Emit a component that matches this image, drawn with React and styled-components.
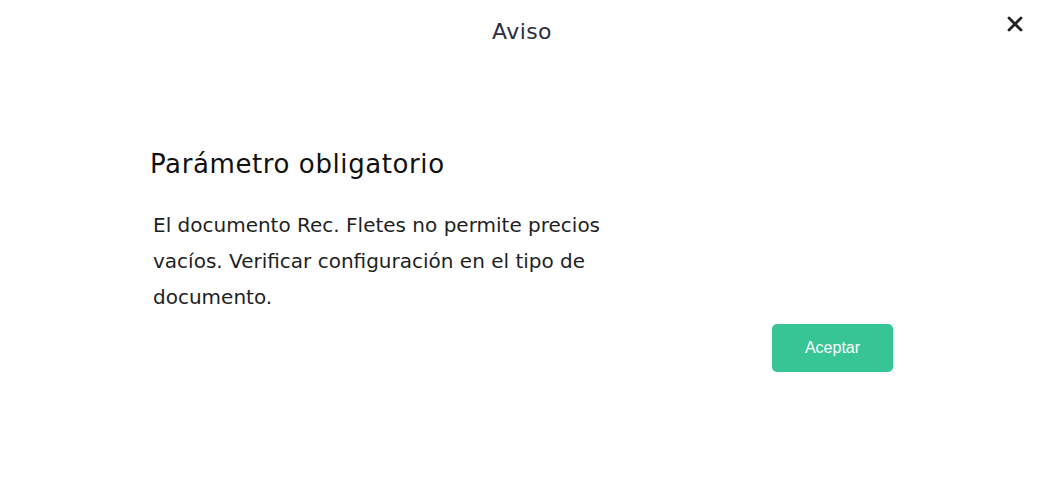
import React from 'react';
import styled, { createGlobalStyle } from 'styled-components';

const GlobalStyle = createGlobalStyle`
  html, body {
    margin: 0;
    padding: 0;
    background: #fff;
  }
  body {
    font-family: "DejaVu Sans", "Open Sans", sans-serif;
  }
`;

const Modal = styled.div`
  width: 1037px;
  height: 483px;
  display: flex;
  flex-direction: column;
  box-sizing: border-box;
`;

const Header = styled.header`
  position: relative;
  height: 63px;
  display: flex;
  align-items: center;
  justify-content: center;
  padding-left: 7px;
`;

const HeaderTitle = styled.h2`
  margin: 0;
  font-size: 22px;
  font-weight: 400;
  color: #2b2f3c;
  letter-spacing: 0.4px;
`;

const CloseButton = styled.button`
  position: absolute;
  top: 13px;
  right: 11px;
  width: 22px;
  height: 22px;
  padding: 0;
  border: none;
  background: transparent;
  cursor: pointer;
  display: flex;
  align-items: center;
  justify-content: center;
  svg {
    display: block;
  }
`;

const Body = styled.div`
  padding: 83px 144px 0 150px;
  display: flex;
  flex-direction: column;
`;

const Title = styled.h1`
  margin: 0 0 25px;
  font-size: 26px;
  font-weight: 400;
  color: #111;
  line-height: 36px;
  letter-spacing: 0.6px;
`;

const Message = styled.p`
  margin: 0 0 0 3px;
  max-width: 480px;
  font-size: 20px;
  line-height: 36px;
  color: #1f1f1f;
`;

const Actions = styled.div`
  display: flex;
  justify-content: flex-end;
  margin-top: 9px;
`;

const AcceptButton = styled.button`
  width: 121px;
  height: 48px;
  border: none;
  border-radius: 5px;
  background: #38c596;
  color: #fff;
  font-family: "Liberation Sans", Arial, sans-serif;
  font-size: 16px;
  cursor: pointer;
`;

export default function App() {
  return (
    <>
      <GlobalStyle />
      <Modal>
        <Header>
          <HeaderTitle>Aviso</HeaderTitle>
          <CloseButton aria-label="Cerrar">
            <svg width="16" height="16" viewBox="0 0 16 16">
              <path d="M2 2 L14 14 M14 2 L2 14" stroke="#222" strokeWidth="2.8" strokeLinecap="round" />
            </svg>
          </CloseButton>
        </Header>
        <Body>
          <Title>Parámetro obligatorio</Title>
          <Message>
            El documento Rec. Fletes no permite precios vacíos. Verificar configuración en el tipo de documento.
          </Message>
          <Actions>
            <AcceptButton>Aceptar</AcceptButton>
          </Actions>
        </Body>
      </Modal>
    </>
  );
}
